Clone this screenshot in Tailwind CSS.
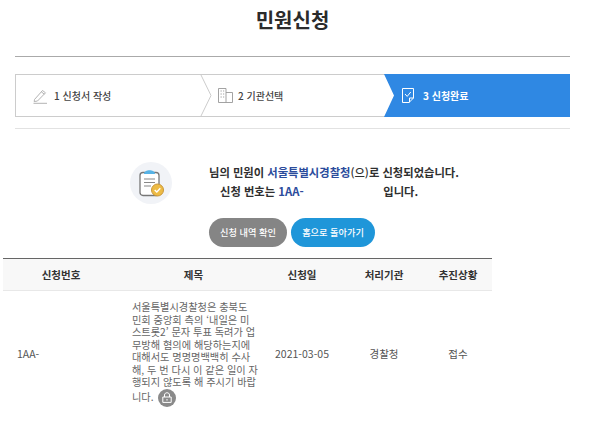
<!DOCTYPE html>
<html lang="ko">
<head>
  <meta charset="UTF-8" />
  <meta name="viewport" content="width=device-width, initial-scale=1.0" />
  <title>민원신청</title>
  <script src="https://cdn.jsdelivr.net/npm/@tailwindcss/browser@4"></script>
</head>
<body class="bg-white w-[600px] h-[425px] overflow-hidden font-['Noto_Sans_CJK_KR','Noto_Sans',sans-serif] text-[#333]">
  <!-- 제목 -->
  <div class="mx-[15px] w-[555px] h-[57px] border-b border-[#aaa] flex justify-center pt-[6px]">
    <h1 class="text-[20px] leading-[28px] font-bold text-[#2b2b2b]">민원신청</h1>
  </div>

  <!-- 단계 -->
  <div class="mx-[15px] w-[555px] mt-[17px] pb-[11px] border-b border-[#e2e2e2]">
    <div class="relative flex h-[43px] border border-[#ccc] text-[10px] font-medium text-[#444]">
      <div class="w-[184px] flex items-center pl-[17px]">
        <svg class="w-[15px] h-[16px]" viewBox="0 0 15 16" fill="none" stroke="#aaa" stroke-width="0.9">
          <path d="M1.5 11.5 L9.5 2.5 L12.5 4.8 L4.5 13 L1.2 13.6 Z M8.3 3.8 L11.3 6.2" />
          <path d="M0.5 15.3 H14" />
        </svg>
        <span class="ml-[6px]">1 신청서 작성</span>
      </div>
      <div class="w-[184px] flex items-center pl-[18px]">
        <svg class="w-[15px] h-[15px]" viewBox="0 0 15 15" fill="none" stroke="#999" stroke-width="0.9">
          <path d="M0.5 0.5 H8 V14.5 H0.5 Z M8 4.5 H14.5 V14.5 H8" />
          <path d="M2.5 3 H3.8 M5 3 H6.2 M2.5 6 H3.8 M5 6 H6.2 M2.5 9 H3.8 M5 9 H6.2" />
        </svg>
        <span class="ml-[5px]">2 기관선택</span>
      </div>
      <div class="flex-1 -my-px -mr-px flex items-center pl-[18px] bg-[#2f88e3] text-white font-bold [clip-path:polygon(0_0,100%_0,100%_100%,0_100%,10px_50%)]">
        <svg class="w-[12px] h-[15px]" viewBox="0 0 12 15" fill="none" stroke="#fff" stroke-width="1">
          <path d="M0.5 0.5 H11.5 V10 L7 14.5 H0.5 Z M11.5 10 H7.5 V14.5" />
          <path d="M3 6 L5.2 8.4 L8.8 4" />
        </svg>
        <span class="ml-[9px]">3 신청완료</span>
      </div>
      <!-- 화살표 구분선 -->
      <svg class="absolute left-[184px] top-[-1px] w-[12px] h-[43px]" viewBox="0 0 12 43" fill="none" stroke="#ccc">
        <path d="M0.5 0 L11 21.5 L0.5 43" />
      </svg>
    </div>
  </div>

  <!-- 완료 메시지 -->
  <div class="flex mt-[33px] pl-[130px]">
    <div class="w-[42px] h-[42px] rounded-full bg-[#f1f3f7] flex items-center justify-center">
      <svg class="w-[30px] h-[30px]" viewBox="0 0 30 30" fill="none">
        <rect x="4" y="4.5" width="19" height="23" rx="3" fill="#fff" stroke="#777" stroke-width="1.3" />
        <path d="M8 6 C8 1 19 1 19 6 Z" fill="#57b3e6" />
        <path d="M8 11 H19 M8 14.5 H19 M8 18 H15" stroke="#888" stroke-width="1.2" />
        <circle cx="21.5" cy="22" r="6" fill="#edbb45" stroke="#c9963a" />
        <path d="M18.7 22 L20.8 24 L24.3 20.3" stroke="#fff" stroke-width="1.4" />
      </svg>
    </div>
    <div class="ml-[37px] pt-[1px] text-[11.3px] leading-[19px] font-bold text-[#2f2f2f]">
      <p>님의 민원이 <span class="text-[#2c4c9c]">서울특별시경찰청</span><span class="font-medium">(으)</span>로 신청되었습니다.</p>
      <p class="flex pl-[11px]"><span>신청 번호는&nbsp;</span><span class="text-[#2c4c9c] w-[105px]">1AA-</span><span>입니다.</span></p>
    </div>
  </div>

  <!-- 버튼 -->
  <div class="flex gap-[4px] mt-[14px] pl-[209px] text-[9.2px] font-medium text-white">
    <div class="w-[78px] h-[29px] rounded-full bg-[#858585] flex items-center justify-center">신청 내역 확인</div>
    <div class="w-[84px] h-[29px] rounded-full bg-[#1f96d9] flex items-center justify-center">홈으로 돌아가기</div>
  </div>

  <!-- 신청 목록 -->
  <div class="ml-[3px] w-[489px] mt-[11px] text-[10.5px]">
    <div class="grid grid-cols-[116px_141px_84px_80px_68px] h-[33px] items-center text-center font-bold text-[#333] bg-[#f8f8f8] border-t border-[#666] border-b-[#e8e8e8] border-b">
      <div>신청번호</div>
      <div class="pl-[8px]">제목</div>
      <div>신청일</div>
      <div>처리기관</div>
      <div>추진상황</div>
    </div>
    <div class="grid grid-cols-[116px_141px_84px_80px_68px] items-center text-center text-[#555] pt-[10px]">
      <div class="text-left pl-[14px]">1AA-</div>
      <div class="text-left pl-[13px] text-[10.2px] leading-[12.5px] whitespace-nowrap text-[#666]">
        서울특별시경찰청은 충북도<br />
        민회 중앙회 측의 ‘내일은 미<br />
        스트롯2’ 문자 투표 독려가 업<br />
        무방해 혐의에 해당하는지에<br />
        대해서도 명명명백백히 수사<br />
        해, 두 번 다시 이 같은 일이 자<br />
        행되지 않도록 해 주시기 바랍<br />
        <span class="inline-flex items-center gap-[4px]">니다.
          <span class="w-[18px] h-[18px] rounded-full bg-[#8a8a8a] inline-flex items-center justify-center">
            <svg class="w-[10px] h-[11px]" viewBox="0 0 10 11" fill="none" stroke="#fff" stroke-width="1">
              <path d="M0.8 5 H9.2 V10.4 H0.8 Z M2.5 5 V3 C2.5 0 7.5 0 7.5 3 V5 M5 7 V8.6" />
            </svg>
          </span>
        </span>
      </div>
      <div>2021-03-05</div>
      <div>경찰청</div>
      <div>접수</div>
    </div>
  </div>
</body>
</html>
